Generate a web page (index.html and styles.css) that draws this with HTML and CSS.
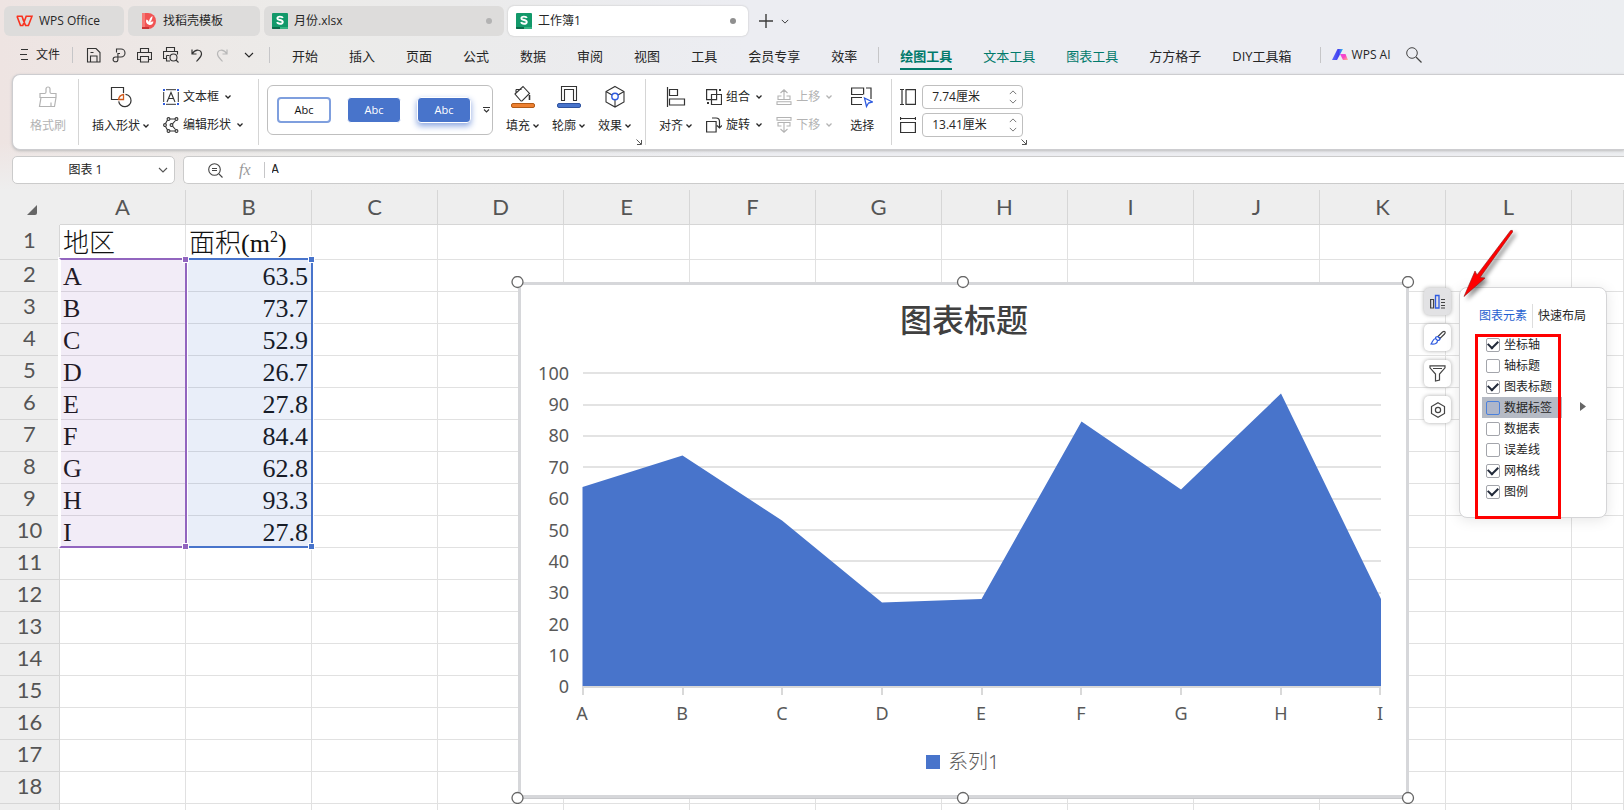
FILE: index.html
```html
<!DOCTYPE html>
<html lang="zh-CN">
<head>
<meta charset="utf-8">
<title>工作簿1 - WPS Office</title>
<link rel="stylesheet" href="styles.css">
</head>
<body>
<svg class="defs" width="0" height="0" aria-hidden="true">
  <defs>
    <symbol id="chev" viewBox="0 0 6 4"><path d="M.5 .5 3 3 5.500 .5" fill="none" stroke="currentColor" stroke-width="1.3"/></symbol>
    <symbol id="chev-lg" viewBox="0 0 10 6"><path d="M1 1 5 5 9 1" fill="none" stroke="currentColor" stroke-width="1.1"/></symbol>
    <symbol id="launch" viewBox="0 0 6 6"><path d="M.5 .5 5 5M5.500 1v4.500H1" fill="none" stroke="currentColor"/></symbol>
    <symbol id="sheet-logo" viewBox="0 0 16 16"><path fill="#12996a" d="M1 0h14a1 1 0 0 1 1 1v14a1 1 0 0 1-1 1H1a1 1 0 0 1-1-1V1a1 1 0 0 1 1-1z"/><path fill="#0a6b49" d="M0 14h8v2H1a1 1 0 0 1-1-1z"/><path fill="#35b382" d="M8 14h8v1a1 1 0 0 1-1 1H8z"/><path d="M10.800 5C10.300 3.400 5.400 2.900 5.400 5.200 5.400 7.600 10.800 6.400 10.800 9 10.800 11.500 5.600 11.200 5.200 9" fill="none" stroke="#fff" stroke-width="1.9"/></symbol>
  </defs>
</svg>

<header class="top">
  <nav class="tabs" aria-label="文档标签">
    <button class="tab tab-home"><svg width="17" height="12" viewBox="0 0 17 12"><path d="M.8 1.200H6L9 9.500M1 1.200 4.500 10.500H6.800L10.200 1.200H16L12.400 10.500H9.600L6.800 4" fill="none" stroke="#f8321f" stroke-width="1.600"/></svg>WPS Office</button>
    <button class="tab tab-tpl"><svg width="14" height="16" viewBox="0 0 14 16"><path d="M0 0h6a8 8 0 0 1 0 16H0z" fill="#f15353"/><path d="M0 14h7v2H0z" fill="#c93434"/><path d="M0 0h3v14H0z" fill="#f67a76"/><path d="M7.500 12C4 11 3.500 8 4.500 6.500 6 7 7 8 7 9.500 6.800 7 8 4.500 10.500 3 10.500 5 10 7 8 9.500c1-.8 2-1.200 3.500-1C11 11 9.500 12.200 7.500 12z" fill="#fff"/></svg>找稻壳模板</button>
    <button class="tab tab-doc"><svg width="16" height="16"><use href="#sheet-logo"/></svg>月份.xlsx<i class="dot"></i></button>
    <button class="tab tab-doc active"><svg width="16" height="16"><use href="#sheet-logo"/></svg>工作簿1<i class="dot"></i></button>
    <button class="icon-btn plus" aria-label="新建"><svg width="14" height="14" viewBox="0 0 14 14"><path d="M7 0v14M0 7h14" stroke="#3c3c3c" stroke-width="1.400"/></svg></button>
    <button class="icon-btn" aria-label="标签列表"><svg width="8" height="5"><use href="#chev-lg"/></svg></button>
  </nav>

  <nav class="menu" aria-label="菜单">
    <button class="file"><svg width="8" height="12" viewBox="0 0 8 12"><path d="M1 .5h7M0 5.500h7M1 10.500h7" stroke="#333"/></svg>文件</button>
    <i class="vline"></i>
    <div class="quick">
      <button class="icon-btn" aria-label="保存"><svg width="15" height="15" viewBox="0 0 15 15"><path d="M1.500 .5h8.500l4 4v9.500h-12.500zM4.500 14V8h6.500v6M4.500 4.500h3" fill="none" stroke="#333" stroke-width="1.100"/></svg></button>
      <button class="icon-btn" aria-label="输出为PDF"><svg width="14" height="15" viewBox="0 0 14 15"><path d="M4.500 4.500V1H9a3.800 3.800 0 0 1 0 8H3.500a2.400 2.400 0 1 0 2.400 2.400V5.500H8" fill="none" stroke="#333" stroke-width="1.100"/></svg></button>
      <button class="icon-btn" aria-label="打印"><svg width="15" height="15" viewBox="0 0 15 15"><path d="M3.500 4.500v-4h8v4M3.500 11.500h-3v-7h14v7h-3M3.500 8.500h8v5.500h-8z" fill="none" stroke="#333" stroke-width="1.100"/></svg></button>
      <button class="icon-btn" aria-label="打印预览"><svg width="16" height="16" viewBox="0 0 16 16"><path d="M3.500 4.500v-4h8v4M3.500 11.500h-3v-7h14v3M3.500 8.500V14H7M3.500 8.500h3" fill="none" stroke="#333" stroke-width="1.100"/><circle cx="10.500" cy="10.500" r="3.500" fill="none" stroke="#333" stroke-width="1.100"/><path d="m13 13 2.500 2.500" stroke="#333" stroke-width="1.100"/></svg></button>
      <button class="icon-btn" aria-label="撤销"><svg width="14" height="13" viewBox="-1 0 14 13"><path d="M1 .5V5h4.500M1 5C5-1 10.500 1 10.500 5c0 3-3 5-5 7.500" fill="none" stroke="#333" stroke-width="1.200"/></svg></button>
      <button class="icon-btn" aria-label="恢复" disabled><svg width="14" height="13" viewBox="-1 0 14 13"><path d="M11 .5V5H6.500M11 5C7-1 1.500 1 1.500 5c0 3 3 5 5 7.500" fill="none" stroke="#b8b8b8" stroke-width="1.200"/></svg></button>
      <button class="icon-btn" aria-label="更多"><svg width="10" height="6"><use href="#chev-lg"/></svg></button>
    </div>
    <i class="vline"></i>
    <div class="items">
      <button>开始</button><button>插入</button><button>页面</button><button>公式</button><button>数据</button><button>审阅</button><button>视图</button><button>工具</button><button>会员专享</button><button>效率</button>
    </div>
    <i class="vline"></i>
    <div class="items context">
      <button class="green current">绘图工具</button><button class="green">文本工具</button><button class="green">图表工具</button><button>方方格子</button><button>DIY工具箱</button>
    </div>
    <i class="vline"></i>
    <button class="ai"><svg width="16" height="12" viewBox="0 0 16 12"><defs><linearGradient id="ai1" x1="0" x2="1"><stop offset="0" stop-color="#5b6bf8"/><stop offset=".6" stop-color="#4340f0"/><stop offset="1" stop-color="#39c8ee"/></linearGradient><linearGradient id="ai2" x1="0" x2="1" y2="1"><stop offset="0" stop-color="#e649e6"/><stop offset=".5" stop-color="#fb45c0"/><stop offset="1" stop-color="#ffc08a"/></linearGradient></defs><path d="M5.500 0H11L5 11H0z" fill="url(#ai1)"/><path d="M8 5h5.500l2.500 6h-5z" fill="url(#ai2)"/></svg>WPS AI</button>
    <button class="icon-btn" aria-label="搜索"><svg width="16" height="16" viewBox="0 0 16 16"><circle cx="6" cy="6" r="5.300" fill="none" stroke="#444"/><path d="m10 10 5.500 5.500" stroke="#444" stroke-width="1.200"/></svg></button>
  </nav>

  <section class="ribbon" aria-label="绘图工具">
    <div class="group g-paint">
      <button class="big" disabled><svg width="20" height="22" viewBox="0 0 20 22"><path d="M8 6V3a2 2 0 0 1 4 0v3c0 1 .5 1.500 1.500 1.500h4.500v4H2v-4h4.500C7.500 7.500 8 7 8 6zM3 11.500 1.500 20.500h15l1.500-9M13 20.500v-4" fill="none" stroke="currentColor" stroke-width="1.200"/></svg><span>格式刷</span></button>
    </div>
    <div class="group g-shape">
      <button class="big"><svg width="22" height="22" viewBox="0 0 22 22"><path d="M8 13.500H1.500V1.500h12v5.500" fill="none" stroke="#333" stroke-width="1.200"/><path d="M8.500 13.500a6 6 0 0 1 5-5v5z" fill="#fff" stroke="#d05a1c" stroke-width="1.300"/><path d="M15.500 8.300a6.200 6.200 0 1 1-6.800 7" fill="none" stroke="#333" stroke-width="1.200"/></svg><span>插入形状<svg class="caret" width="6" height="4"><use href="#chev"/></svg></span></button>
      <div class="stack">
        <button class="row"><svg width="16" height="16" viewBox="0 0 16 16"><path d="M.7 3v10M15.300 3v10M3 .7h10M3 15.300h10" stroke="#333"/><path d="M4 13 8 3.500 12 13M5.500 9.500h5" fill="none" stroke="#333" stroke-width="1.100"/><path d="M0 0h2v2H0zM14 0h2v2h-2zM0 14h2v2H0zM14 14h2v2h-2z" fill="#2e5be0"/></svg>文本框<svg class="row-caret" width="6" height="4"><use href="#chev"/></svg></button>
        <button class="row"><svg width="16" height="16" viewBox="0 0 16 16"><g fill="none" stroke="#333" stroke-width="1.100"><path d="M4.500 3 2.500 6.500M2.500 9.500 4.500 13M7 2h5M7 14h5M12.500 3.500 9.500 6.800M9.500 9.200l3 3.300"/><circle cx="5.500" cy="2" r="1.400"/><circle cx="13.500" cy="2" r="1.400"/><circle cx="2" cy="8" r="1.400"/><circle cx="5.500" cy="14" r="1.400"/><circle cx="13.500" cy="14" r="1.400"/><circle cx="8.500" cy="8" r="1.400"/></g></svg>编辑形状<svg class="row-caret" width="6" height="4"><use href="#chev"/></svg></button>
      </div>
    </div>
    <div class="group g-style">
      <div class="gallery">
        <button class="abc outline">Abc</button><button class="abc solid">Abc</button><button class="abc solid raised">Abc</button>
        <button class="icon-btn more" aria-label="更多样式"><svg width="7" height="6" viewBox="0 0 7 6"><path d="M0 .5h7M1 2.500 3.500 5 6 2.500" fill="none" stroke="#333" stroke-width="1.100"/></svg></button>
      </div>
      <button class="big"><svg width="24" height="24" viewBox="0 0 24 24"><path d="M4 9 12 1.500l6.500 7-7.500 7.500H10zM4 9l6 7M5 4.500h5.500M5 4.500V8" fill="none" stroke="#333" stroke-width="1.100"/><path d="M18.500 10v5" stroke="#333" stroke-width="1.600"/><rect x=".5" y="18.500" width="23" height="4" rx="1.500" fill="#ed8030" stroke="#b05a18"/></svg><span>填充<svg class="caret" width="6" height="4"><use href="#chev"/></svg></span></button>
      <button class="big"><svg width="24" height="24" viewBox="0 0 24 24"><path d="M4.500 15.500V1.500h15v14M7.500 15.500v-11h9v11" fill="none" stroke="#333" stroke-width="1.100"/><path d="M4 15.500h4M16 15.500h4" stroke="#333"/><rect x=".5" y="18.500" width="23" height="4" rx="1.500" fill="#4874cb" stroke="#2f539e"/></svg><span>轮廓<svg class="caret" width="6" height="4"><use href="#chev"/></svg></span></button>
      <button class="big"><svg width="22" height="24" viewBox="0 0 22 24"><path d="m11 1.500 9 5v10.500l-9 5-9-5V6.500zM2 6.500l6 3.500M20 6.500 14 10M11 15v7" fill="none" stroke="#333" stroke-width="1.100"/><circle cx="11" cy="11.500" r="3.200" fill="none" stroke="#2e5be0" stroke-width="1.400"/></svg><span>效果<svg class="caret" width="6" height="4"><use href="#chev"/></svg></span></button>
      <button class="launcher" aria-label="设置形状格式"><svg width="6" height="6"><use href="#launch"/></svg></button>
    </div>
    <div class="group g-arrange">
      <button class="big"><svg width="20" height="22" viewBox="0 0 20 22"><path d="M1.500 1v20M3.500 3.500h8v6h-8zM3.500 13h15v6h-15z" fill="none" stroke="#333" stroke-width="1.200"/></svg><span>对齐<svg class="caret" width="6" height="4"><use href="#chev"/></svg></span></button>
      <div class="stack">
        <button class="row"><svg width="16" height="16" viewBox="0 0 16 16"><path d="M.6 .6h10v10h-10zM5.500 5.500h10v10h-10z" fill="none" stroke="#333" stroke-width="1.200"/><path d="M13 0h2v2h-2zM1 13h2v2H1z" fill="#333"/></svg>组合<svg class="row-caret" width="6" height="4"><use href="#chev"/></svg></button>
        <button class="row"><svg width="16" height="16" viewBox="0 0 16 16"><path d="M.6 4.500h9.500v10.500H.6zM6 1h4c2.500 0 3.500 1 3.500 3.500V11M11 8.500l2.500 2.500L16 8.500" fill="none" stroke="#333" stroke-width="1.200"/></svg>旋转<svg class="row-caret" width="6" height="4"><use href="#chev"/></svg></button>
      </div>
      <div class="stack">
        <button class="row" disabled><svg width="16" height="16" viewBox="0 0 16 16"><path d="M8 11V.8M4.500 4 8 .8 11.500 4M5.500 7H2v3.500h12V7h-3.500M1 12.800h14v2.700H1z" fill="none" stroke="currentColor" stroke-width="1.100"/></svg>上移<svg class="row-caret" width="6" height="4"><use href="#chev"/></svg></button>
        <button class="row" disabled><svg width="16" height="16" viewBox="0 0 16 16"><path d="M8 5v10.200M4.500 12 8 15.200 11.500 12M5.500 9H2V5.500h12V9h-3.500M1 .5h14v2.700H1z" fill="none" stroke="currentColor" stroke-width="1.100"/></svg>下移<svg class="row-caret" width="6" height="4"><use href="#chev"/></svg></button>
      </div>
      <button class="big select"><svg width="22" height="22" viewBox="0 0 22 22"><path d="M12 8.500H.6V2h12v6.500M15 2h5v11M11 18.500H.6v-7H11" fill="none" stroke="#333" stroke-width="1.200"/><path d="m13.500 12 8 4-4 1-2 3.500z" fill="#fff" stroke="#2e5be0" stroke-width="1.300"/></svg><span>选择</span></button>
    </div>
    <div class="group g-size">
      <label class="size"><svg width="16" height="16" viewBox="0 0 16 16"><path d="M0 .5h4M0 15.500h4M2 .5v15M6 .6h9.500v14.800H6z" fill="none" stroke="#333" stroke-width="1.200"/></svg><span class="spin"><input type="text" value="7.74厘米" aria-label="形状高度"><span class="arrows"><button aria-label="增加高度"><svg class="up" width="8" height="5"><use href="#chev-lg"/></svg></button><button aria-label="减少高度"><svg width="8" height="5"><use href="#chev-lg"/></svg></button></span></span></label>
      <label class="size"><svg width="16" height="16" viewBox="0 0 16 16"><path d="M.5 0v3M15.500 0v3M.5 1.500h15M.6 5.500h14.800v10H.6z" fill="none" stroke="#333" stroke-width="1.200"/></svg><span class="spin"><input type="text" value="13.41厘米" aria-label="形状宽度"><span class="arrows"><button aria-label="增加宽度"><svg class="up" width="8" height="5"><use href="#chev-lg"/></svg></button><button aria-label="减少宽度"><svg width="8" height="5"><use href="#chev-lg"/></svg></button></span></span></label>
      <button class="launcher" aria-label="大小和属性"><svg width="6" height="6"><use href="#launch"/></svg></button>
    </div>
  </section>

  <div class="formula-row">
    <div class="name-box"><input type="text" value="图表 1" aria-label="名称框"><button class="icon-btn" aria-label="名称列表"><svg width="10" height="6"><use href="#chev-lg"/></svg></button></div>
    <div class="formula">
      <button class="icon-btn" aria-label="缩放"><svg width="15" height="15" viewBox="0 0 15 15"><circle cx="6.500" cy="6.500" r="5.800" fill="none" stroke="#444" stroke-width="1.100"/><path d="M4 5.500h5M4 7.500h5M11 11l3.500 3.500" stroke="#444" stroke-width="1.100"/></svg></button>
      <button class="icon-btn fx">fx</button>
      <i class="vline"></i>
      <input type="text" value="A" aria-label="编辑栏">
    </div>
  </div>
</header>

<main class="sheet">
  <table class="grid">
    <colgroup><col class="col-num"><col class="col"><col class="col"><col class="col"><col class="col"><col class="col"><col class="col"><col class="col"><col class="col"><col class="col"><col class="col"><col class="col"><col class="col"><col></colgroup>
    <thead><tr><th class="corner"><svg width="10" height="10" viewBox="0 0 10 10"><path d="M10 0v8a2 2 0 0 1-2 2H0z" fill="#666"/></svg></th><th>A</th><th>B</th><th>C</th><th>D</th><th>E</th><th>F</th><th>G</th><th>H</th><th>I</th><th>J</th><th>K</th><th>L</th><th></th></tr></thead>
    <tbody>
      <tr class="first"><th>1</th><td>地区</td><td>面积(m<sup>2</sup>)</td><td colspan="11" class="rest"></td></tr>
      <tr><th>2</th><td>A</td><td class="n">63.5</td><td colspan="11" class="rest"></td></tr>
      <tr><th>3</th><td>B</td><td class="n">73.7</td><td colspan="11" class="rest"></td></tr>
      <tr><th>4</th><td>C</td><td class="n">52.9</td><td colspan="11" class="rest"></td></tr>
      <tr><th>5</th><td>D</td><td class="n">26.7</td><td colspan="11" class="rest"></td></tr>
      <tr><th>6</th><td>E</td><td class="n">27.8</td><td colspan="11" class="rest"></td></tr>
      <tr><th>7</th><td>F</td><td class="n">84.4</td><td colspan="11" class="rest"></td></tr>
      <tr><th>8</th><td>G</td><td class="n">62.8</td><td colspan="11" class="rest"></td></tr>
      <tr><th>9</th><td>H</td><td class="n">93.3</td><td colspan="11" class="rest"></td></tr>
      <tr><th>10</th><td>I</td><td class="n">27.8</td><td colspan="11" class="rest"></td></tr>
      <tr><th>11</th><td></td><td></td><td colspan="11" class="rest"></td></tr>
      <tr><th>12</th><td></td><td></td><td colspan="11" class="rest"></td></tr>
      <tr><th>13</th><td></td><td></td><td colspan="11" class="rest"></td></tr>
      <tr><th>14</th><td></td><td></td><td colspan="11" class="rest"></td></tr>
      <tr><th>15</th><td></td><td></td><td colspan="11" class="rest"></td></tr>
      <tr><th>16</th><td></td><td></td><td colspan="11" class="rest"></td></tr>
      <tr><th>17</th><td></td><td></td><td colspan="11" class="rest"></td></tr>
      <tr><th>18</th><td></td><td></td><td colspan="11" class="rest"></td></tr>
      <tr><th></th><td></td><td></td><td colspan="11" class="rest"></td></tr>
    </tbody>
  </table>

  <div class="range cats"><i></i><i></i></div>
  <div class="range vals"><i></i><i></i></div>

  <svg class="chart" width="904" height="528" viewBox="511 276 904 528" role="img" aria-label="图表标题 面积图">
    <rect x="519.500" y="283.500" width="888" height="513" fill="#fff" stroke="#d6d7da" stroke-width="3"/>
    <path d="M518 798.500h890" stroke="#c8c9cc"/>
    <text class="title" x="964" y="332" text-anchor="middle">图表标题</text>
    <path d="M583 373h798M583 405h798M583 436h798M583 467h798M583 499h798M583 530h798M583 561h798M583 593h798M583 624h798M583 656h798" stroke="#e3e3e3" stroke-width="2"/>
    <path d="M582.500 487 682.500 455.500 782 520.500 882 602.500 981.500 599 1081.500 421.500 1181 489.500 1281 393.500 1381 599V686.500H582.500z" fill="#4874cb"/>
    <path d="M582 687h799M583 687v8M683 687v8M782 687v8M882 687v8M982 687v8M1081 687v8M1181 687v8M1281 687v8M1380 687v8" stroke="#d9d9d9" stroke-width="2"/>
    <g class="axis" text-anchor="end">
      <text x="569" y="380">100</text><text x="569" y="411">90</text><text x="569" y="442">80</text><text x="569" y="474">70</text><text x="569" y="505">60</text><text x="569" y="537">50</text><text x="569" y="568">40</text><text x="569" y="599">30</text><text x="569" y="631">20</text><text x="569" y="662">10</text><text x="569" y="693">0</text>
    </g>
    <g class="axis" text-anchor="middle">
      <text x="582" y="720">A</text><text x="682" y="720">B</text><text x="782" y="720">C</text><text x="882" y="720">D</text><text x="981" y="720">E</text><text x="1081" y="720">F</text><text x="1181" y="720">G</text><text x="1281" y="720">H</text><text x="1380" y="720">I</text>
    </g>
    <rect x="926" y="755" width="14" height="14" fill="#4874cb"/>
    <text class="legend" x="948" y="769">系列1</text>
    <g fill="#fff" stroke="#666" stroke-width="1.300"><circle cx="517.500" cy="282" r="5.500"/><circle cx="963" cy="282" r="5.500"/><circle cx="1408" cy="282" r="5.500"/><circle cx="517.500" cy="798" r="5.500"/><circle cx="963" cy="798" r="5.500"/><circle cx="1408" cy="798" r="5.500"/></g>
  </svg>

  <div class="side-tools">
    <button class="pressed" aria-label="图表元素"><svg width="15" height="16" viewBox="0 0 15 16"><path d="M.6 5.500h3v8.500h-3z" fill="none" stroke="#444" stroke-width="1.200"/><path d="M5.500 1.500h3.500V14H5.500z" fill="none" stroke="#2e5be0" stroke-width="1.300"/><path d="M11 5.500h4M11 8.500h4M11 11.500h4M11 14h4" stroke="#444"/></svg></button>
    <button aria-label="图表样式"><svg width="16" height="16" viewBox="0 0 16 16"><path d="M8 6.500 12.500 2c2-1.500 3.500 0 2 2L10 8.500z" fill="none" stroke="#444" stroke-width="1.200"/><path d="M8 6.500c-2 0-2.500.5-2.500 2C3 9 3 11 1 14c4 .5 6.500-.5 6.500-3.500 1.500 0 2.500-.5 2.500-2zM5.500 8.500l2 2" fill="none" stroke="#2e5be0" stroke-width="1.200"/></svg></button>
    <button aria-label="图表筛选器"><svg width="17" height="17" viewBox="0 0 17 17"><path d="M1 .8h15v2L10.500 9v6l-4 1V9L1 2.800zM4 3.500h9" fill="none" stroke="#444" stroke-width="1.200"/></svg></button>
    <button aria-label="设置图表区域格式"><svg width="16" height="16" viewBox="0 0 16 16"><path d="m8 .7 6.500 3.800v7L8 15.300l-6.500-3.800v-7z" fill="none" stroke="#444" stroke-width="1.200"/><circle cx="8" cy="8" r="2.600" fill="none" stroke="#444" stroke-width="1.200"/></svg></button>
  </div>

  <aside class="panel">
    <div class="panel-tabs"><button class="on">图表元素</button><i></i><button>快速布局</button></div>
    <div class="checks">
      <label><input type="checkbox" checked>坐标轴</label>
      <label><input type="checkbox">轴标题</label>
      <label><input type="checkbox" checked>图表标题</label>
      <label class="hover"><input type="checkbox">数据标签</label>
      <label><input type="checkbox">数据表</label>
      <label><input type="checkbox">误差线</label>
      <label><input type="checkbox" checked>网格线</label>
      <label><input type="checkbox" checked>图例</label>
    </div>
    <svg class="sub" width="6" height="9" viewBox="0 0 6 9"><path d="M0 0 6 4.500 0 9z" fill="#666"/></svg>
    <div class="mark"></div>
  </aside>
  <svg class="arrow" width="64" height="80" viewBox="1458 226 64 80"><path d="M1510.600 230.500q2.500-1 2 1.500L1480 277.500 1485 278 1464 296.500 1475 271 1477 275z" fill="#f00" stroke="#8e1414" stroke-width=".6"/></svg>
</main>
</body>
</html>
```
FILE: styles.css
```css
* { box-sizing: border-box; }
html, body { height: 100%; }
body {
  margin: 0;
  display: flex;
  flex-direction: column;
  overflow: hidden;
  background: #eee;
  color: #262626;
  font: 12px/16px "Open Sans", "Noto Sans CJK SC", sans-serif;
}
button, input { font: inherit; color: inherit; }
button { padding: 0; border: 0; background: none; white-space: nowrap; }
svg { display: block; flex: none; }
.defs { position: absolute; }
.icon-btn { display: flex; align-items: center; justify-content: center; }

.top {
  flex: none;
  background: linear-gradient(rgba(238,238,238,0) 75%, #eee), linear-gradient(90deg, #eee4e2, #ecebe9 18%, #ebebeb 28%, #ecedf2 46%, #ecedf2 90%, #eceef1);
}

/* Document tabs */
.tabs { display: flex; align-items: center; gap: 4px; padding: 6px 4px 0; }
.tab {
  display: flex;
  align-items: center;
  gap: 6px;
  height: 30px;
  padding: 0 12px;
  border-radius: 6px;
  background: #dddcdb;
}
.tab-home { width: 120px; }
.tab-tpl { width: 132px; gap: 7px; padding-left: 14px; }
.tab-doc { width: 240px; padding: 0 12px 0 8px; }
.tab.active { background: #fff; box-shadow: 0 0 2px #bbb; }
.dot { width: 6px; height: 6px; margin-left: auto; border-radius: 50%; background: #b3b3b3; }
.active .dot { background: #8f8f8f; }
.plus { margin: 0 4px 0 7px; }

/* Menu bar */
.menu { display: flex; align-items: center; height: 38px; padding: 0 20px; }
.vline { flex: none; width: 1px; height: 16px; background: #c6c6c8; }
.file { display: flex; align-items: center; gap: 8px; margin-right: 12px; }
.quick { display: flex; align-items: center; gap: 11px; width: 196px; padding-left: 13px; }
.quick button:last-child { margin-left: 4px; }
.items { display: flex; gap: 31px; padding: 2px 21px 0 22px; font-size: 13px; line-height: 24px; }
.items.context { padding-right: 28px; padding-left: 21px; }
.green { color: #017a6b; }
.current { font-weight: 700; box-shadow: 0 2px #017a6b; }
.ai { display: flex; align-items: center; gap: 4px; margin: 0 15px 0 11px; }

/* Ribbon */
.ribbon {
  display: flex;
  height: 76px;
  margin-left: 12px;
  padding: 4px 0;
  border: 1px solid #cdcdd0;
  border-right: 0;
  border-radius: 8px 0 0 8px;
  background: #fff;
  box-shadow: 0 1px 3px #bbb;
}
.group { position: relative; display: flex; align-items: flex-start; border-right: 1px solid #d5d5d5; }
.group:last-child { border-right: 0; }
.big { display: flex; flex-direction: column; align-items: center; height: 60px; padding-top: 6px; }
.big > svg { height: 24px; }
.big > span { display: flex; align-items: center; margin-top: auto; padding-bottom: 5px; }
.caret { margin-left: 3px; }
.row { display: flex; align-items: center; gap: 4px; height: 28px; }
.row-caret { margin-left: 2px; }
.stack { display: flex; flex-direction: column; padding-top: 4px; }
button:disabled { color: #b3b3b3; }
.g-paint { padding: 0 12px 0 17px; }
.g-shape { gap: 14px; padding: 0 15px 0 13px; }
.g-style { gap: 13px; padding: 0 14px 0 8px; }
.g-arrange { gap: 14px; padding: 0 17px 0 13px; }
.select { margin-left: 4px; }
.gallery {
  display: flex;
  align-items: center;
  gap: 16px;
  width: 226px;
  height: 50px;
  margin: 6px 0 0;
  padding-left: 9px;
  border: 1px solid #bfbfbf;
  border-radius: 6px;
}
.abc { width: 54px; height: 26px; border-radius: 4px; font-size: 11px; }
.outline { border: 2px solid #7f9fde; color: #111; }
.solid { border: 1px solid #fff; background: #4874cb; color: #fff; }
.raised { box-shadow: 0 3px 6px #8ba6e0; }
.more { margin-left: -4px; }
.launcher { position: absolute; right: 3px; bottom: 0; color: #555; }
.g-size { flex-direction: column; gap: 4px; padding: 6px 22px 0 8px; }
.g-size .launcher { right: 18px; }
.size { display: flex; align-items: center; gap: 6px; }
.spin { display: flex; width: 101px; height: 24px; border: 1px solid #bfbfbf; border-radius: 4px; }
.spin input { width: 86px; padding: 0 0 0 9px; border: 0; background: none; }
.arrows { display: flex; flex-direction: column; justify-content: space-evenly; color: #666; }
.up { transform: rotate(180deg); }

/* Name box and formula bar */
.formula-row { display: flex; gap: 8px; padding: 6px 0; margin-left: 12px; }
.name-box, .formula {
  display: flex;
  align-items: center;
  height: 28px;
  border: 1px solid #cbcbcb;
  border-radius: 5px;
  background: #fff;
}
.name-box { width: 163px; padding-right: 6px; color: #555; }
.name-box input { flex: 1; min-width: 0; padding: 0; border: 0; background: none; text-align: center; color: #222; }
.formula { flex: 1; padding-left: 24px; border-right: 0; border-radius: 5px 0 0 5px; }
.fx { margin: 0 13px 0 16px; color: #999; font: italic 16px "Liberation Serif", serif; }
.formula input { flex: 1; padding: 0 0 0 7px; border: 0; background: none; font: 12px "Liberation Mono", monospace; }

/* Worksheet */
.sheet { position: relative; flex: 1; min-height: 0; overflow: hidden; background: #fff; }
.grid { width: 100%; min-width: 1600px; table-layout: fixed; border-collapse: separate; border-spacing: 0; }
.col-num { width: 60px; }
.col { width: 126px; }
.grid th, .grid td { height: 32px; padding: 0; border: solid #e1e1e1; border-width: 0 1px 1px 0; }
.grid th { background: #eee; border-color: #d6d6d6; color: #555; font: 22px/24px Lato, sans-serif; }
.grid thead th { height: 35px; }
.grid .corner { padding: 5px 0 0 4px; border-color: transparent; }
.corner svg { margin: 0 auto; }
.grid .first th, .grid .first td { height: 35px; }
.grid tbody th { padding-bottom: 4px; }
.grid td { padding: 3px 3px 0; font: 300 26px/26px "Liberation Serif", "Noto Sans CJK SC", serif; color: #111; white-space: nowrap; }
.grid .n { text-align: right; }
.grid sup { font-size: 16px; line-height: 0; }
.grid .rest { background: repeating-linear-gradient(90deg, transparent 0 125px, #e1e1e1 125px 126px); }

.range { position: absolute; top: 68px; height: 290px; outline: 1px solid #fff; border: 2px solid; }
.cats { left: 59px; width: 128px; border-color: #9265bf; border-left-color: #fff; background: rgba(146,101,191,.12); }
.vals { left: 187px; width: 126px; border-color: #4874cb; border-left-width: 0; background: rgba(72,116,203,.12); }
.range i { position: absolute; right: -3px; width: 5px; height: 5px; background: #4874cb; outline: 1px solid #fff; }
.cats i { background: #9265bf; }
.cats { z-index: 1; }
.range i:first-child { top: -3px; }
.range i:last-child { bottom: -3px; }

.chart { position: absolute; left: 511px; top: 86px; }
.title { font: 500 32px "Liberation Serif", "Noto Sans CJK SC", serif; fill: #404040; }
.axis { font: 18px "Noto Sans", sans-serif; fill: #595959; }
.legend { font: 300 20px "Noto Sans", "Noto Sans CJK SC", sans-serif; fill: #595959; }

/* Chart side buttons and element panel */
.side-tools { position: absolute; left: 1424px; top: 98px; display: flex; flex-direction: column; gap: 9px; }
.side-tools button { display: flex; align-items: center; justify-content: center; width: 27px; height: 27px; border-radius: 5px; background: #fff; box-shadow: 0 0 4px #aaa; }
.side-tools .pressed { background: #e2e2e4; }
.panel { position: absolute; left: 1459px; top: 97px; width: 148px; height: 231px; padding-top: 16px; border: 1px solid #d5d5d7; border-radius: 8px; background: #fff; box-shadow: 0 2px 14px rgba(0,0,0,.1); }
.panel-tabs { display: flex; align-items: center; gap: 5px; padding-left: 19px; }
.panel-tabs i { width: 1px; height: 24px; background: #ddd; }
.on { color: #1f5fd0; }
.checks { padding: 6px 0 0 22px; }
.checks label { display: flex; align-items: center; gap: 4px; width: 80px; height: 21px; padding-left: 4px; }
.hover { background: #b5bac4; }
.checks input { appearance: none; display: grid; place-items: center; flex: none; width: 14px; height: 14px; margin: 0; border: 1px solid #a3a5ab; border-radius: 2px; background: #fff; }
.hover input { border-color: #4a80dc; background: #aeb6ca; }
.checks input:checked::before { content: ""; width: 8px; height: 5px; margin-top: -3px; border: solid #222a3a; border-width: 0 0 2px 2px; transform: rotate(-45deg); }
.sub { position: absolute; right: 20px; top: 114px; }
.mark { position: absolute; left: 15px; top: 46px; width: 86px; height: 185px; border: 3px solid #f00; }
.arrow { position: absolute; left: 1458px; top: 36px; filter: drop-shadow(3px 3px 2px rgba(0,0,0,.45)); }
```
